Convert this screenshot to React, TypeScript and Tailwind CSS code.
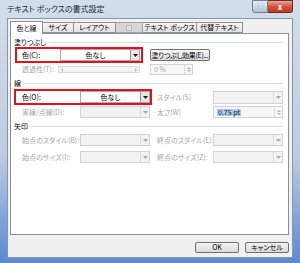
import React from 'react';

function Arrow({ gray }: { gray?: boolean }) {
  return (
    <svg width="5" height="3" viewBox="0 0 5 3">
      <path d="M0 0h5L2.5 3z" fill={gray ? '#a8a8a8' : '#1a1a1a'} />
    </svg>
  );
}

function Combo({ className, text, disabled }: { className: string; text?: string; disabled?: boolean }) {
  return (
    <div
      className={`flex h-[12px] border ${className} ${
        disabled ? 'border-[#d2d2d2] bg-[#f2f2f2]' : 'border-[#a3a9b2] bg-white'
      }`}
    >
      <div className="flex-1 flex items-center justify-center">{text}</div>
      <div
        className={`w-[9px] flex items-center justify-center border-l ${
          disabled ? 'border-[#dcdcdc]' : 'border-[#8d939b] bg-[#e6e6e6]'
        }`}
      >
        <Arrow gray={disabled} />
      </div>
    </div>
  );
}

function Spin({ className, children }: { className: string; children: React.ReactNode }) {
  return (
    <div className={`flex h-[11px] border border-[#d2d2d2] bg-[#f7f7f7] ${className}`}>
      <div className="flex-1 flex items-center pl-[3px]">{children}</div>
      <div className="w-[8px] flex flex-col items-center justify-center gap-[1px] border-l border-[#dcdcdc]">
        <svg width="4" height="2" viewBox="0 0 4 2">
          <path d="M0 2h4L2 0z" fill="#b0b0b0" />
        </svg>
        <svg width="4" height="2" viewBox="0 0 4 2">
          <path d="M0 0h4L2 2z" fill="#b0b0b0" />
        </svg>
      </div>
    </div>
  );
}

function Section({ label }: { label: string }) {
  return (
    <div className="flex items-center h-[10px] gap-[3px]">
      <span>{label}</span>
      <div className="flex-1 h-px bg-[#d8dde4]" />
    </div>
  );
}

export default function App() {
  return (
    <div className="w-[300px] h-[263px] flex flex-col whitespace-nowrap bg-linear-to-b from-[#d4deea] via-[#bccbdf] via-60% to-[#5b87d2] font-['Noto_Sans_CJK_JP','Noto_Sans',sans-serif] [font-feature-settings:'palt'] text-[7px] leading-none text-black">
      {/* title bar */}
      <div className="h-[18px] flex items-start pl-[7px]">
        <span className="mt-[5px] text-[8px] text-[#1b2636]">テキスト ボックスの書式設定</span>
        <div className="ml-auto mr-[7px] flex">
          <div className="w-[16px] h-[13px] flex items-center justify-center rounded-bl-[3px] border border-[#6f7f96] bg-linear-to-b from-[#e3eaf3] to-[#b3c3d8] text-[8px] font-bold text-white [text-shadow:0_0_1px_#37506f]">
            ?
          </div>
          <div className="w-[25px] h-[13px] flex items-center justify-center rounded-br-[3px] border border-l-0 border-[#6e2a24] bg-linear-to-b from-[#e9a698] via-[#d2533f] to-[#c2382a] text-[8px] font-bold text-white">
            x
          </div>
        </div>
      </div>

      {/* dialog body */}
      <div className="mx-[7px] h-[240px] bg-[#f0f0f0] border border-[#8795a9] flex flex-col pl-[2px] pr-[3px] pt-[1px]">
        {/* tabs */}
        <div className="flex items-end h-[13px]">
          <div className="relative z-10 w-[33px] h-[13px] -mb-px bg-white border border-b-0 border-[#8c9097] flex items-center justify-center">
            色と線
          </div>
          <div className="w-[31px] h-[11px] bg-linear-to-b from-[#f5f5f5] to-[#e3e3e3] border border-l-0 border-[#8c9097] flex items-center justify-center">
            サイズ
          </div>
          <div className="w-[42px] h-[11px] bg-linear-to-b from-[#f5f5f5] to-[#e3e3e3] border border-l-0 border-[#8c9097] flex items-center justify-center">
            レイアウト
          </div>
          <div className="w-[27px] h-[11px] bg-[#d6d6d6] border border-l-0 border-[#a2a5aa] flex items-center justify-center">
            <div className="w-[6px] h-[6px] border border-[#b9b9b9] bg-[#e4e4e4]" />
          </div>
          <div className="w-[54px] h-[11px] bg-linear-to-b from-[#f5f5f5] to-[#e3e3e3] border border-l-0 border-[#8c9097] flex items-center justify-center">
            テキスト ボックス
          </div>
          <div className="w-[46px] h-[11px] bg-linear-to-b from-[#f5f5f5] to-[#e3e3e3] border border-l-0 border-[#8c9097] flex items-center justify-center">
            代替テキスト
          </div>
        </div>

        {/* panel */}
        <div className="h-[202px] bg-white border border-[#8c9097] flex flex-col pl-[3px] pr-[5px] pt-[3px]">
          <Section label="塗りつぶし" />

          <div className="flex items-center">
            <div className="ml-[1px] w-[128px] h-[16px] border-2 border-[#e5101c] flex items-center pl-[5px]">
              <span className="w-[38px]">色(C):</span>
              <Combo className="w-[80px]" text="色なし" />
            </div>
            <div className="ml-[7px] w-[60px] h-[12px] border border-[#707070] rounded-[2px] bg-linear-to-b from-[#f6f6f6] to-[#dcdcdc] flex items-center justify-center tracking-[-0.3px] overflow-hidden">
              塗りつぶし効果(E)...
            </div>
          </div>

          <div className="mt-[1px] h-[11px] flex items-center pl-[8px] text-[#a6a6a6]">
            <span className="w-[36px]">透過性(T):</span>
            <div className="w-[82px] h-[7px] border border-[#dadada] bg-[#f3f3f3] flex items-center justify-between px-[2px]">
              <svg width="2" height="4" viewBox="0 0 2 4">
                <path d="M2 0v4L0 2z" fill="#bdbdbd" />
              </svg>
              <svg width="2" height="4" viewBox="0 0 2 4">
                <path d="M0 0v4l2-2z" fill="#bdbdbd" />
              </svg>
            </div>
            <Spin className="ml-[10px] w-[43px] h-[10px]">0 %</Spin>
          </div>

          <div className="mt-[3px]">
            <Section label="線" />
          </div>

          <div className="mt-[1px] flex items-center">
            <div className="w-[138px] h-[16px] border-2 border-[#e5101c] flex items-center pl-[6px]">
              <span className="w-[58px]">色(O):</span>
              <Combo className="w-[70px]" text="色なし" />
            </div>
            <span className="ml-[5px] w-[56px] text-[#a6a6a6]">スタイル(S)</span>
            <Combo className="w-[70px] h-[13px]" disabled />
          </div>

          <div className="mt-[1px] h-[12px] flex items-center pl-[8px] text-[#a6a6a6]">
            <span className="w-[58px]">実線/点線(D):</span>
            <Combo className="w-[70px]" disabled />
            <span className="ml-[7px] w-[56px]">太さ(W)</span>
            <Spin className="w-[70px] h-[12px] text-[#1a1a1a]">
              <span className="bg-[#a9c9f0] px-[1px]">0.75 pt</span>
            </Spin>
          </div>

          <div className="mt-[3px]">
            <Section label="矢印" />
          </div>

          <div className="mt-[3px] h-[12px] flex items-center pl-[8px] text-[#a6a6a6]">
            <span className="w-[58px]">始点のスタイル(B):</span>
            <Combo className="w-[70px]" disabled />
            <span className="ml-[7px] w-[56px]">終点のスタイル(E):</span>
            <Combo className="w-[70px]" disabled />
          </div>

          <div className="mt-[5px] h-[12px] flex items-center pl-[8px] text-[#a6a6a6]">
            <span className="w-[58px]">始点のサイズ(I):</span>
            <Combo className="w-[70px]" disabled />
            <span className="ml-[7px] w-[56px]">終点のサイズ(Z):</span>
            <Combo className="w-[70px]" disabled />
          </div>
        </div>

        {/* buttons */}
        <div className="mt-[7px] flex justify-end gap-[6px]">
          <div className="w-[44px] h-[11px] border border-[#707070] rounded-[2px] bg-linear-to-b from-[#f4f4f4] to-[#dadada] flex items-center justify-center">
            OK
          </div>
          <div className="w-[44px] h-[11px] border border-[#707070] rounded-[2px] bg-linear-to-b from-[#f4f4f4] to-[#dadada] flex items-center justify-center">
            キャンセル
          </div>
        </div>
      </div>
    </div>
  );
}
